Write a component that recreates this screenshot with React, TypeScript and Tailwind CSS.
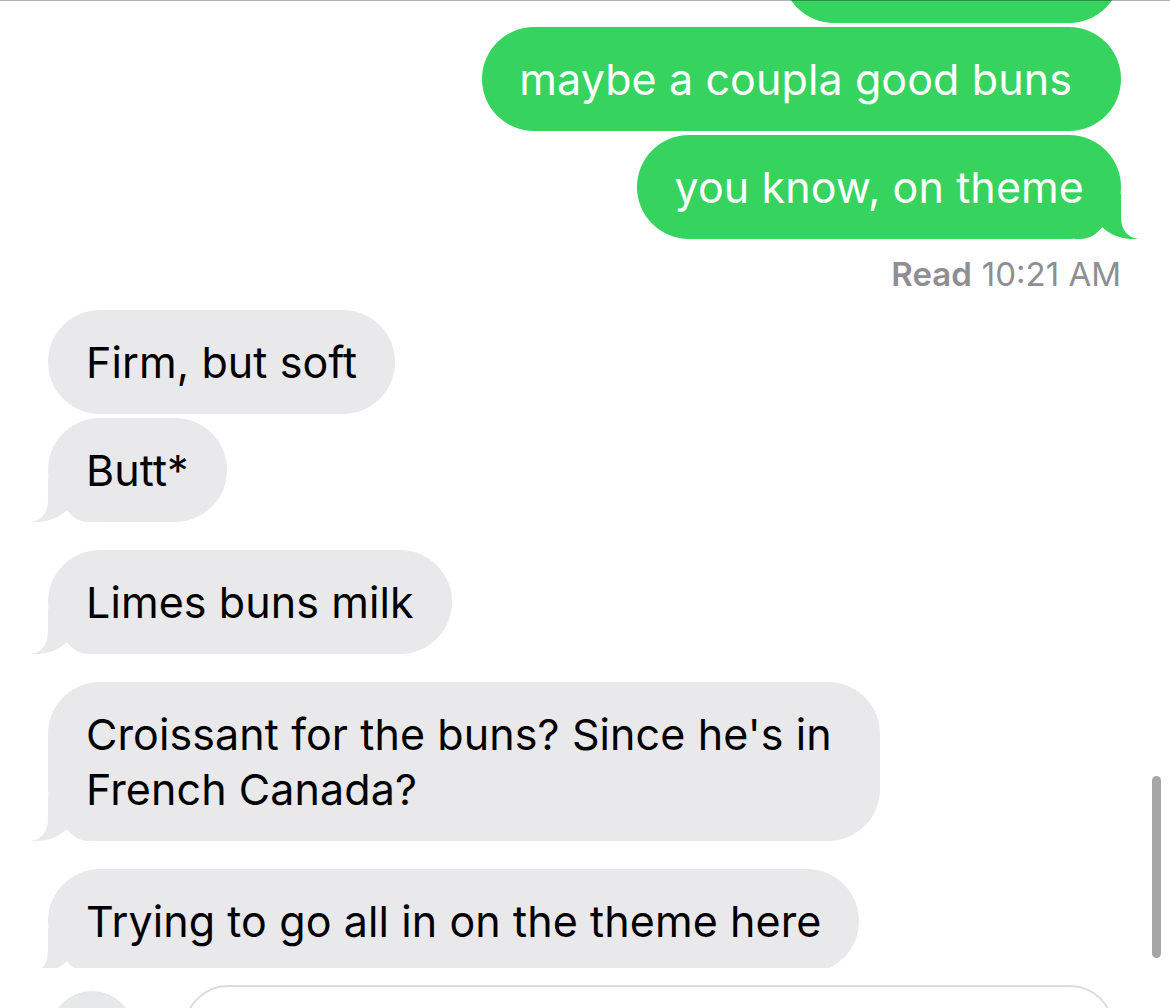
import React from "react";

type Msg = {
  text: string;
  tail?: boolean;
  pr?: string;
};

const GREEN = "#37d35f";
const GRAY = "#e9e9eb";

// iMessage style tail, drawn for the right side; mirrored for the left
const Tail = ({ side, color }: { side: "left" | "right"; color: string }) => (
  <svg
    width="65"
    height="45"
    viewBox="0 0 65 45"
    className={
      side === "right"
        ? "absolute bottom-0 right-[-19px]"
        : "absolute bottom-0 left-[-19px] -scale-x-100"
    }
  >
    <path
      d="M0 0 L46 0 L46 22 C46 36 52 43 63 45 C50 46 36 42 27 33 C22 40 15 45 5 45 L0 45 Z"
      fill={color}
    />
  </svg>
);

const Sent = ({ text, tail, pr }: Msg) => (
  <div className="flex justify-end">
    <div
      className={`relative rounded-[52px] bg-[#37d35f] pl-[37px] ${pr ?? "pr-[37px]"} pt-[25px] pb-[24px] text-white text-[43px] leading-[55px] tracking-[0.1px]`}
    >
      <span className="relative z-10">{text}</span>
      {tail && <Tail side="right" color={GREEN} />}
    </div>
  </div>
);

const Received = ({ text, tail }: Msg) => (
  <div className="flex justify-start">
    <div className="relative max-w-[832px] rounded-[52px] bg-[#e9e9eb] px-[38px] pt-[25px] pb-[24px] text-black text-[43px] leading-[55px] tracking-[0.1px]">
      <span className="relative z-10">{text}</span>
      {tail && <Tail side="left" color={GRAY} />}
    </div>
  </div>
);

export default function App() {
  return (
    <div
      className="relative w-[1170px] h-[1008px] bg-white overflow-hidden"
      style={{ fontFamily: "Inter, 'Noto Sans', sans-serif" }}
    >
      {/* top hairline */}
      <div className="absolute top-0 left-0 right-0 h-px bg-black/30 z-20" />

      {/* conversation */}
      <div className="h-[968px] overflow-hidden pl-[48px] pr-[49px]">
        <div className="flex flex-col gap-[4px] -mt-[81px]">
          {/* previous message, scrolled out of view */}
          <div className="flex justify-end">
            <div className="w-[339px] h-[104px] rounded-[52px] bg-[#37d35f]" />
          </div>
          <Sent text="maybe a coupla good buns" pr="pr-[49px]" />
          <Sent text="you know, on theme" tail />
        </div>

        <div className="flex justify-end mt-[14px] text-[33px] leading-[42px] text-[#8e8e93]">
          <span className="font-semibold">Read</span>
          <span className="ml-[10px]">10:21 AM</span>
        </div>

        <div className="flex flex-col mt-[15px]">
          <div className="flex flex-col gap-[4px]">
            <Received text="Firm, but soft" />
            <Received text="Butt*" tail />
          </div>
          <div className="mt-[28px]">
            <Received text="Limes buns milk" tail />
          </div>
          <div className="mt-[28px]">
            <Received text="Croissant for the buns? Since he's in French Canada?" tail />
          </div>
          <div className="mt-[28px]">
            <Received text="Trying to go all in on the theme here" tail />
          </div>
        </div>
      </div>

      {/* scroll indicator */}
      <div className="absolute left-[1152px] top-[776px] w-[9px] h-[182px] rounded-full bg-[#a6a6a6]" />

      {/* input bar */}
      <div className="flex items-start gap-[50px] pl-[50px] pt-[17px]">
        <div className="w-[84px] h-[84px] rounded-full bg-[#e6e8ea] mt-[6px] shrink-0" />
        <div className="w-[930px] h-[90px] rounded-[44px] border-2 border-[#dcdcdc]" />
      </div>
    </div>
  );
}
